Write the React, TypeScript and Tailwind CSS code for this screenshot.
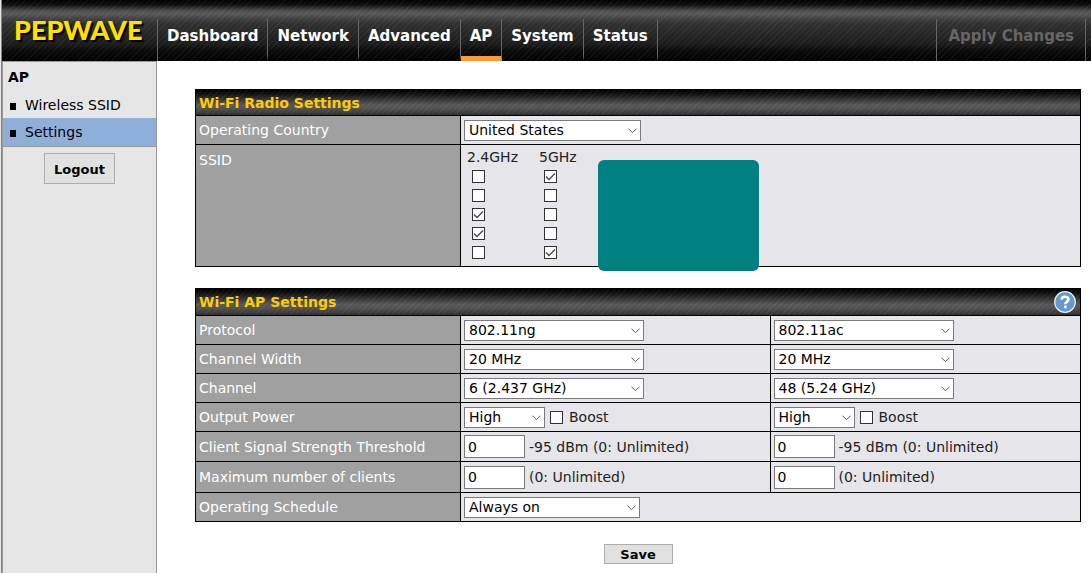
import React, { useState } from 'react';
import clsx from 'clsx';

const navItems = ['Dashboard', 'Network', 'Advanced', 'AP', 'System', 'Status'];
const sideItems = ['Wireless SSID', 'Settings'];

const ssids = [
  { low: false, high: true },
  { low: false, high: false },
  { low: true, high: false },
  { low: true, high: false },
  { low: false, high: true },
];

const stripes =
  'bg-[repeating-linear-gradient(135deg,rgba(255,255,255,0.05)_0px,rgba(255,255,255,0.05)_1px,transparent_1px,transparent_4px)]';

function Select({ label, value, options, className }: { label: string; value: string; options?: string[]; className: string }) {
  return (
    <span className={clsx('relative inline-block h-[21px]', className)}>
      <select
        aria-label={label}
        defaultValue={value}
        className="block h-full w-full appearance-none border border-[#7a7a7a] bg-white pl-1 pr-5 text-sm leading-[19px] text-black"
      >
        {(options ?? [value]).map((o) => (
          <option key={o}>{o}</option>
        ))}
      </select>
      <svg viewBox="0 0 9 6" className="pointer-events-none absolute right-1 top-2 h-[6px] w-[9px]" fill="none" stroke="#555">
        <path d="M0.5 0.7 L4.5 4.7 L8.5 0.7" />
      </svg>
    </span>
  );
}

function Checkbox({ label, defaultChecked = false }: { label: string; defaultChecked?: boolean }) {
  const [checked, setChecked] = useState(defaultChecked);
  return (
    <span className="relative block h-[13px] w-[13px] shrink-0">
      <input
        type="checkbox"
        aria-label={label}
        checked={checked}
        onChange={(e) => setChecked(e.target.checked)}
        className="block h-[13px] w-[13px] appearance-none border border-[#333] bg-white"
      />
      {checked && (
        <svg viewBox="0 0 13 13" className="pointer-events-none absolute inset-0" fill="none" stroke="#444" strokeWidth="1.3">
          <path d="M2 6.5 L5 9.5 L11 3.5" />
        </svg>
      )}
    </span>
  );
}

function NumberField({ label, hint }: { label: string; hint: string }) {
  return (
    <label className="flex items-center gap-1">
      <input
        type="text"
        aria-label={label}
        defaultValue="0"
        className="h-[23px] w-[61px] border border-[#7a7a7a] bg-white px-[3px] text-sm leading-none text-black"
      />
      {hint}
    </label>
  );
}

function Power({ band }: { band: string }) {
  return (
    <div className="flex items-center">
      <Select label={`Output Power ${band}`} value="High" options={['High', 'Medium', 'Low']} className="w-[81px]" />
      <label className="ml-[5px] flex items-center gap-[6px]">
        <Checkbox label={`Boost ${band}`} />
        Boost
      </label>
    </div>
  );
}

function Panel({ title, help, children }: { title: string; help?: boolean; children: React.ReactNode }) {
  return (
    <section className="border border-black">
      <div className="bg-[linear-gradient(#000_0%,#101010_15%,#303030_35%,#585858_60%,#505050_75%,#303030_100%)]">
        <div className={clsx('flex items-center justify-between pl-[3px] pr-1', help ? 'h-[26px]' : 'h-[25px]', stripes)}>
          <h2 className="text-sm font-bold text-[#ffcc00]">{title}</h2>
          {help && (
            <button type="button" aria-label="Help" className="h-[22px] w-[22px]">
              <svg viewBox="0 0 22 22" className="block h-[22px] w-[22px]">
                <circle cx="11" cy="11" r="10.3" fill="#6699cc" stroke="#e8f0f8" strokeWidth="1.2" />
                <path d="M7.6 8.6 C7.6 4.8 14.4 4.8 14.4 8.4 C14.4 10.8 11.3 10.6 11.3 13.2" fill="none" stroke="#fff" strokeWidth="2.6" />
                <rect x="10" y="14.6" width="2.7" height="2.6" fill="#fff" />
              </svg>
            </button>
          )}
        </div>
      </div>
      {children}
    </section>
  );
}

const th = 'w-[265px] border-r border-t border-black bg-[#a0a0a0] px-[3px] text-left font-normal text-white';
const td = 'border-t border-black bg-[#e6e5ea] px-[3px]';

export default function App() {
  return (
    <div className="min-h-screen border-l border-[#e6e6e6] bg-white font-['Verdana','DejaVu_Sans',sans-serif] text-sm text-[#222]">
      <div className="flex min-h-screen flex-col border-l border-[#d0694a]">
        {/* Top bar */}
        <header className="bg-[linear-gradient(#000_0px,#101010_5px,#505050_11px,#585858_14px,#404040_19px,#303030_24px,#1c1c1c_44px,#0c0c0c_50px,#000_61px)]">
          <div className={clsx('flex h-[61px] items-end', stripes)}>
            <div className="w-[155px] self-start pl-3 pt-[14px] font-['Lato','Open_Sans',sans-serif] text-[27px] font-black leading-8 text-[#ffe000] [text-shadow:2px_2px_1px_#000]">
              PEPWAVE
            </div>
            <nav className="flex h-[42px] border-l border-[#666]">
              {navItems.map((item) => (
                <a
                  key={item}
                  href="#"
                  className={clsx(
                    'flex border-b-[5px] border-r border-r-[#666] px-[9px] pt-[7px] text-[15px] font-bold leading-5 text-white',
                    item === 'AP' ? 'border-b-[#ff9933]' : 'border-b-transparent',
                  )}
                >
                  {item}
                </a>
              ))}
            </nav>
            <button type="button" disabled className="ml-auto mr-[5px] flex h-[42px] border-x border-[#666] px-[11px] pt-[7px] text-[15px] font-bold leading-5 text-[#666]">
              Apply Changes
            </button>
          </div>
        </header>

        <div className="flex grow">
          {/* Side menu */}
          <aside className="w-[155px] shrink-0 border-x border-t border-[#999] bg-[#e6e6e6] text-black">
            <h1 className="px-[5px] pt-[5px] text-sm font-bold leading-5">AP</h1>
            <ul className="mt-1 border-b border-[#999]">
              {sideItems.map((item) => (
                <li key={item} className={clsx(item === 'Settings' && 'bg-[#8fafdb] pb-px')}>
                  <a href="#" className="flex h-[27px] items-center gap-[9px] pl-[7px]">
                    <span className="mt-1 h-[7px] w-[6px] bg-black" />
                    {item}
                  </a>
                </li>
              ))}
            </ul>
            <button type="button" className="mx-auto mt-[6px] block h-[31px] w-[71px] border border-[#adadad] bg-[#e1e1e1] pt-1 text-[13px] font-bold">
              Logout
            </button>
          </aside>

          <main className="min-w-0 grow pb-2 pl-[38px] pr-[10px] pt-7">
            <Panel title="Wi-Fi Radio Settings">
              <table className="w-full table-fixed border-separate border-spacing-0">
                <tbody>
                  <tr className="h-[29px]">
                    <th scope="row" className={th}>Operating Country</th>
                    <td className={td}>
                      <Select label="Operating Country" value="United States" className="w-[177px] align-middle" />
                    </td>
                  </tr>
                  <tr className="h-[122px] align-top">
                    <th scope="row" className={clsx(th, 'pt-[5px]')}>SSID</th>
                    <td className={clsx(td, 'pt-[2px]')}>
                      <div className="relative flex">
                        <table className="w-[144px] table-fixed">
                          <thead>
                            <tr className="h-5">
                              <th scope="col" className="pl-[3px] text-left font-normal">2.4GHz</th>
                              <th scope="col" className="pl-[3px] text-left font-normal">5GHz</th>
                            </tr>
                          </thead>
                          <tbody>
                            {ssids.map((s, i) => (
                              <tr key={i} className="h-[19px]">
                                <td className="pl-2"><Checkbox label={`SSID ${i + 1} 2.4GHz`} defaultChecked={s.low} /></td>
                                <td className="pl-2"><Checkbox label={`SSID ${i + 1} 5GHz`} defaultChecked={s.high} /></td>
                              </tr>
                            ))}
                          </tbody>
                        </table>
                        <div className="absolute left-[134px] top-[13px] h-[111px] w-[161px] rounded-[6px] bg-[#008080]" />
                      </div>
                    </td>
                  </tr>
                </tbody>
              </table>
            </Panel>

            <div className="h-[21px]" />

            <Panel title="Wi-Fi AP Settings" help>
              <table className="w-full table-fixed border-separate border-spacing-0">
                <tbody>
                  <tr className="h-[29px]">
                    <th scope="row" className={th}>Protocol</th>
                    <td className={clsx(td, 'border-r')}><Select label="Protocol 2.4GHz" value="802.11ng" className="w-[180px] align-middle" /></td>
                    <td className={td}><Select label="Protocol 5GHz" value="802.11ac" className="w-[180px] align-middle" /></td>
                  </tr>
                  <tr className="h-[29px]">
                    <th scope="row" className={th}>Channel Width</th>
                    <td className={clsx(td, 'border-r')}><Select label="Channel Width 2.4GHz" value="20 MHz" options={['20 MHz', '40 MHz']} className="w-[180px] align-middle" /></td>
                    <td className={td}><Select label="Channel Width 5GHz" value="20 MHz" options={['20 MHz', '40 MHz', '80 MHz']} className="w-[180px] align-middle" /></td>
                  </tr>
                  <tr className="h-[29px]">
                    <th scope="row" className={th}>Channel</th>
                    <td className={clsx(td, 'border-r')}><Select label="Channel 2.4GHz" value="6 (2.437 GHz)" className="w-[180px] align-middle" /></td>
                    <td className={td}><Select label="Channel 5GHz" value="48 (5.24 GHz)" className="w-[180px] align-middle" /></td>
                  </tr>
                  <tr className="h-[29px]">
                    <th scope="row" className={th}>Output Power</th>
                    <td className={clsx(td, 'border-r')}><Power band="2.4GHz" /></td>
                    <td className={td}><Power band="5GHz" /></td>
                  </tr>
                  <tr className="h-[30px]">
                    <th scope="row" className={th}>Client Signal Strength Threshold</th>
                    <td className={clsx(td, 'border-r')}><NumberField label="Signal threshold 2.4GHz" hint="-95 dBm (0: Unlimited)" /></td>
                    <td className={td}><NumberField label="Signal threshold 5GHz" hint="-95 dBm (0: Unlimited)" /></td>
                  </tr>
                  <tr className="h-[31px]">
                    <th scope="row" className={th}>Maximum number of clients</th>
                    <td className={clsx(td, 'border-r')}><NumberField label="Maximum clients 2.4GHz" hint="(0: Unlimited)" /></td>
                    <td className={td}><NumberField label="Maximum clients 5GHz" hint="(0: Unlimited)" /></td>
                  </tr>
                  <tr className="h-[29px]">
                    <th scope="row" className={th}>Operating Schedule</th>
                    <td colSpan={2} className={td}><Select label="Operating Schedule" value="Always on" className="w-[176px] align-middle" /></td>
                  </tr>
                </tbody>
              </table>
            </Panel>

            <button type="button" className="mx-auto mt-[22px] block h-5 w-[69px] border border-[#adadad] bg-[#e1e1e1] text-[13px] font-bold leading-none text-black">
              Save
            </button>
          </main>
        </div>
      </div>
    </div>
  );
}
